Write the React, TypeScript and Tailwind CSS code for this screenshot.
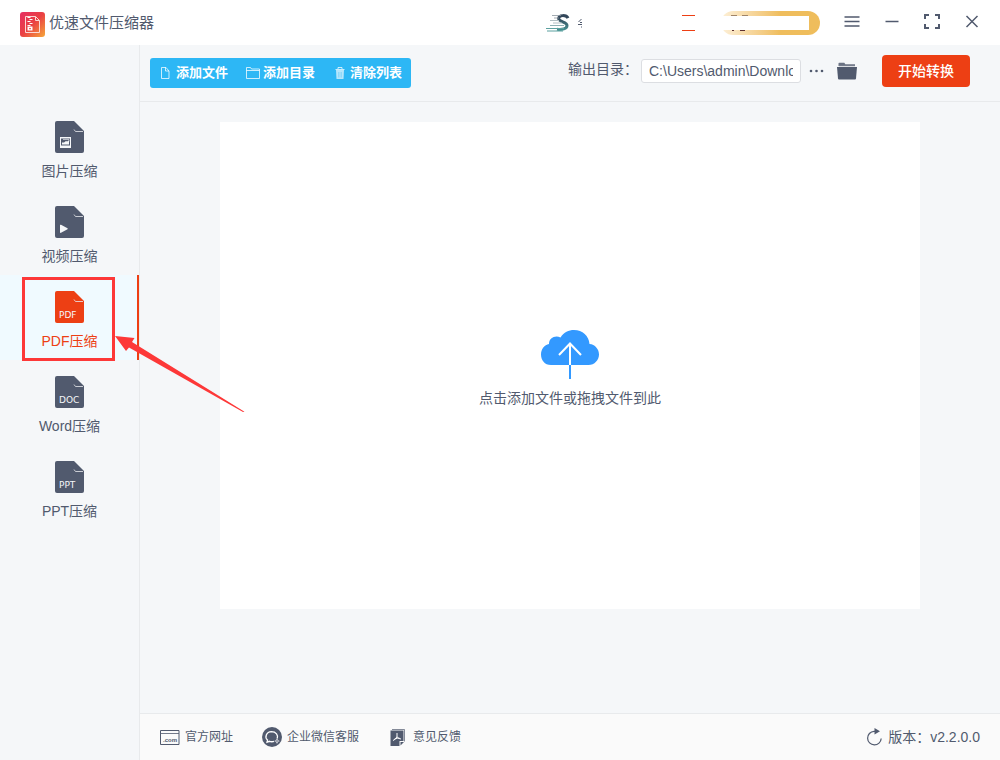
import { useState } from 'react';
import type { ReactNode } from 'react';

type TabKey = 'image' | 'video' | 'pdf' | 'word' | 'ppt';

const TABS: { key: TabKey; label: string; tag?: string }[] = [
  { key: 'image', label: '图片压缩' },
  { key: 'video', label: '视频压缩' },
  { key: 'pdf', label: 'PDF压缩', tag: 'PDF' },
  { key: 'word', label: 'Word压缩', tag: 'DOC' },
  { key: 'ppt', label: 'PPT压缩', tag: 'PPT' },
];

function AppLogo() {
  return (
    <svg width="25" height="25" viewBox="0 0 25 25" fill="none">
      <defs>
        <linearGradient id="logoFill" x1="0" y1="0" x2="25" y2="25" gradientUnits="userSpaceOnUse">
          <stop offset="0" stopColor="#e62e63" />
          <stop offset="0.5" stopColor="#ea4143" />
          <stop offset="1" stopColor="#f6a83a" />
        </linearGradient>
      </defs>
      <rect width="25" height="25" rx="3" fill="url(#logoFill)" />
      <path d="M5.5 4.500h10l4 4v12h-14z" stroke="#fbd9d6" />
      <path d="M15.500 4.500v4h4" stroke="#fbd9d6" />
      <path d="M7.500 5.500h3M9.500 7.500h3M7.500 9.500h3M9.500 11.500h3M7.500 13.500h3" stroke="#fff" strokeWidth="1.200" />
      <path d="M7.500 14.500h5V18.500h-5z" fill="#fff" />
      <path d="M9 16.700h2" stroke="#ea4143" />
    </svg>
  );
}

function UserLogo() {
  return (
    <svg width="24" height="18" viewBox="0 0 24 18" fill="none">
      <defs>
        <linearGradient id="userFill" x1="0" y1="0" x2="0" y2="18" gradientUnits="userSpaceOnUse">
          <stop offset="0.2" stopColor="#33475a" />
          <stop offset="1" stopColor="#4a9a98" />
        </linearGradient>
      </defs>
      <path d="M22 4.200C20.500.800 12.800.600 12.600 4.600c0 3.400 8.400 3.200 8.400 6.800 0 3.600-5 4.400-10 3.800" stroke="url(#userFill)" strokeWidth="3" />
      <path d="M6 1.500h9M8 4h5" stroke="#8a959e" strokeWidth="0.800" />
      <path d="M4 6.500h9M7 9h9" stroke="#b3bec3" strokeWidth="1" />
      <path d="M4 11.500h14" stroke="#8fb0b3" strokeWidth="1" />
      <path d="M0 14.500h18M1 17h16" stroke="#5ba09f" strokeWidth="1" />
    </svg>
  );
}

function DocIcon({ kind, tag }: { kind: TabKey; tag?: string }) {
  return (
    <svg width="29" height="32" viewBox="0 0 29 32" fill="none">
      <path d="M2 0h17l10 10v20a2 2 0 0 1-2 2H2a2 2 0 0 1-2-2V2a2 2 0 0 1 2-2z" fill="currentColor" />
      <path d="M19 8.500l1.500 2H28" stroke="#e8eaed" strokeOpacity="0.8" />
      {kind === 'image' && (
        <>
          <path d="M5 16h11v11H5z" fill="#f5f7f9" />
          <path d="M6 17.500h9v7H6z" fill="currentColor" />
          <path d="M7 23.500v-2h2l2-1.500 1 .500 2-1v4z" fill="#f5f7f9" />
          <path d="M8 18.500h6v2" stroke="#f5f7f9" strokeOpacity="0.6" />
        </>
      )}
      {kind === 'video' && (
        <path d="M5 19v7.500q.300.700 1 .300l6.500-3.500q.500-.500 0-1L6 18.800q-.700-.300-1 .200z" fill="#f5f7f9" />
      )}
      {tag && (
        <text x="4" y="27" fontSize="9" fontFamily="DejaVu Sans, sans-serif" fill="#f5f7f9">
          {tag}
        </text>
      )}
    </svg>
  );
}

/* Marks the tab the user is being guided to */
function Highlight() {
  return (
    <>
      <span className="pointer-events-none absolute left-[22px] top-[2px] h-[84px] w-[93px] border-3 border-[#fd3838]" />
      <svg
        className="pointer-events-none absolute left-[115px] top-[60px]"
        width="130"
        height="78"
        viewBox="0 0 130 78"
      >
        <path d="M0 1l19.500 2-2.500 4L129.500 76.700 128 77 14 12.500 11 16z" fill="#fd3838" />
      </svg>
    </>
  );
}

function FileIcon() {
  return (
    <svg width="14" height="14" viewBox="0 0 14 14" fill="none" stroke="#fff" strokeOpacity="0.75">
      <path d="M2.500 1.500h4.500l3 3.500v7.500H2.500z" />
      <path d="M6.500 1.500v3.500h3.500" />
    </svg>
  );
}

function FolderIcon() {
  return (
    <svg width="14" height="14" viewBox="0 0 14 14" fill="none" stroke="#fff" strokeOpacity="0.75">
      <path d="M.5 12.500V1.500h4l1 1.500h8v9.500z" />
      <path d="M.5 4.500h13" />
    </svg>
  );
}

function TrashIcon() {
  return (
    <svg width="14" height="14" viewBox="0 0 14 14" fill="none">
      <path d="M3 4h8l-.500 9h-7z" fill="#fff" fillOpacity="0.65" />
      <path d="M2.500 3.500h9M5 3V1.500h4V3" stroke="#fff" strokeOpacity="0.75" />
      <path d="M5.500 6v5.500M7 6v5.500M8.500 6v5.500" stroke="#2db7f5" strokeOpacity="0.5" strokeWidth="0.600" />
    </svg>
  );
}

function WindowButton({ label, children }: { label: string; children: ReactNode }) {
  return (
    <button type="button" aria-label={label} className="flex h-11 w-10 items-center justify-center pb-1">
      <svg width="18" height="18" viewBox="0 0 18 18" fill="none" stroke="#515a6e">
        {children}
      </svg>
    </button>
  );
}

function TitleBar() {
  return (
    <header className="flex h-[45px] shrink-0 items-center bg-white pl-5 pr-2">
      <div className="flex items-center gap-1 pt-1">
        <AppLogo />
        <h1 className="pb-1 text-[15px] leading-6">优速文件压缩器</h1>
      </div>
      <div className="ml-auto flex items-center">
        <UserLogo />
        <svg className="ml-2" width="4" height="12" viewBox="0 0 4 12" fill="none" stroke="#515a6e">
          <path d="M3.500 2L.5 5M2 5.500h2M0 7.500h4M3 10h1" />
        </svg>
        <span className="ml-[100px] h-4 w-[13px] border-y border-[#ed3f14]" />
        <button
          type="button"
          aria-label="会员"
          className="ml-[26px] h-6 w-[99px] rounded-full bg-linear-to-r from-[#fdf0d8] to-[#efbd5c] to-60%"
        >
          <svg width="99" height="24" viewBox="0 0 99 24" fill="none">
            <path d="M10 4.500h6M21 4.500h6" stroke="#a08468" />
            <path d="M11 19.500h2M19 19.500h5" stroke="#5e3030" />
            <path d="M0 5h88v14H0z" fill="#fff" />
          </svg>
        </button>
      </div>
      <div className="ml-3 flex">
        <WindowButton label="菜单">
          <path d="M1.500 5h15M1.500 9.500h15M1.500 14h15" strokeWidth="1.500" />
        </WindowButton>
        <WindowButton label="最小化">
          <path d="M2.500 9.500h13" strokeWidth="1.500" />
        </WindowButton>
        <WindowButton label="最大化">
          <path d="M2 7V3h4M12 3h4v4M16 12v4h-4M6 16H2v-4" strokeWidth="2" />
        </WindowButton>
        <WindowButton label="关闭">
          <path d="M3.500 4l11 11M14.500 4l-11 11" strokeWidth="1.500" />
        </WindowButton>
      </div>
    </header>
  );
}

function Toolbar() {
  const [path, setPath] = useState('C:\\Users\\admin\\Downloads');

  return (
    <div className="flex h-[57px] shrink-0 items-center border-b border-[#e8eaec] pl-[10px] pr-[30px]">
      <div className="flex h-[30px] items-center gap-[18px] rounded-[3px] bg-[#2db7f5] pl-[9px] pr-[9px] text-[13px] font-bold text-white">
        <button type="button" className="flex items-center gap-[3px]">
          <FileIcon />
          添加文件
        </button>
        <button type="button" className="flex items-center gap-[3px]">
          <FolderIcon />
          添加目录
        </button>
        <button type="button" className="flex items-center gap-[3px]">
          <TrashIcon />
          清除列表
        </button>
      </div>

      <div className="ml-auto flex items-center pb-1">
        <label htmlFor="output" className="pb-1 text-sm">
          输出目录：
        </label>
        <input
          id="output"
          type="text"
          value={path}
          onChange={(e) => setPath(e.target.value)}
          className="ml-[3px] h-6 w-40 rounded-[3px] border border-[#dcdee2] bg-white px-[7px] text-sm outline-none"
        />
        <button type="button" aria-label="选择目录" className="ml-2">
          <svg width="16" height="4" viewBox="0 0 16 4" fill="#515a6e">
            <circle cx="2" cy="2" r="1.300" />
            <circle cx="7.500" cy="2" r="1.300" />
            <circle cx="13" cy="2" r="1.300" />
          </svg>
        </button>
        <button type="button" aria-label="打开目录" className="ml-3">
          <svg width="20" height="18" viewBox="0 0 20 18" fill="#515a6e">
            <path d="M1.500 4V1.500q0-.800.800-.800h5l1 1.500H18V4z" fillOpacity="0.85" />
            <path d="M0 5h20l-1 11.500q-.100 1-1 1H2q-.900 0-1-1z" />
            <path d="M2 4.300h16" stroke="#c3c7cf" strokeWidth="0.700" />
          </svg>
        </button>
        <button
          type="button"
          className="ml-[25px] h-8 rounded bg-[#ed3f14] px-4 text-sm font-medium text-white"
        >
          开始转换
        </button>
      </div>
    </div>
  );
}

function FooterBar() {
  return (
    <footer className="flex h-[47px] shrink-0 items-center border-t border-[#e8eaec] bg-[#fafafa] px-5">
      <div className="flex items-center gap-[29px] text-xs">
        <a href="#site" className="flex items-center gap-[5px]">
          <svg width="20" height="20" viewBox="0 0 20 20" fill="none" stroke="#515a6e">
            <path d="M.5 3.500h18.500v14H.5z" />
            <path d="M1 6.500h18" strokeOpacity="0.8" />
            <text x="3" y="15" fontSize="6" fontWeight="bold" fontFamily="Liberation Sans, sans-serif" fill="#515a6e" stroke="none">
              .com
            </text>
          </svg>
          官方网址
        </a>
        <a href="#wechat" className="flex items-center gap-[5px]">
          <svg width="20" height="20" viewBox="0 0 20 20" fill="none">
            <circle cx="10" cy="10" r="10" fill="#515a6e" />
            <path d="M12 14.300c-1.500.600-3.200.500-4.500 0L5 15.200l.500-2.200C2.500 10.500 4 5 9.500 4.700c4.500 0 7 3.300 5.700 6.800" stroke="#fff" strokeWidth="1.300" />
            <path d="M15 12.200v3.600M13.200 14h3.600" stroke="#fff" strokeWidth="1.200" strokeLinecap="round" />
            <circle cx="15" cy="14" r="0.800" fill="#515a6e" />
          </svg>
          企业微信客服
        </a>
        <a href="#feedback" className="flex items-center gap-[5px]">
          <svg width="20" height="20" viewBox="0 0 20 20" fill="none">
            <path d="M4 2.500h12.500v12" stroke="#515a6e" strokeOpacity="0.7" />
            <path d="M2.500 3.500h13V14h-4v5h-9z" fill="#515a6e" />
            <path d="M12.500 18.500V15h3.500z" fill="#515a6e" />
            <path d="M9 6v3.500q-1 3-4 4M9 9.500q1 2.500 4 2.500M6.500 12q3-1.300 5-.800" stroke="#fff" />
          </svg>
          意见反馈
        </a>
      </div>
      <div className="ml-auto flex items-center gap-[5px] text-sm">
        <svg width="17" height="18" viewBox="0 0 17 18" fill="none">
          <path d="M9.500 3.300H8a6.800 6.800 0 1 0 7.200 7.200" stroke="#515a6e" strokeWidth="1.200" />
          <path d="M8.500 0l5.500 3.300-5.500 3.200z" fill="#515a6e" />
        </svg>
        版本：v2.2.0.0
      </div>
    </footer>
  );
}

export default function App() {
  const [active, setActive] = useState<TabKey>('pdf');

  return (
    <div
      lang="zh-CN"
      className="flex h-screen flex-col overflow-hidden bg-[#f5f7f9] font-['Liberation_Sans','Noto_Sans_CJK_SC',sans-serif] text-[#515a6e]"
    >
      <TitleBar />
      <div className="flex min-h-0 flex-1">
        <nav className="relative z-10 w-[140px] shrink-0 border-r border-[#e8eaec] pt-[60px]">
          {TABS.map((tab) => (
            <button
              key={tab.key}
              type="button"
              onClick={() => setActive(tab.key)}
              className={`relative flex h-[85px] w-full flex-col items-center gap-2 border-r-2 pl-[2px] pt-4 text-sm ${
                active === tab.key
                  ? 'border-[#ed3f14] bg-[#f0faff] text-[#ed3f14]'
                  : 'border-transparent'
              }`}
            >
              <DocIcon kind={tab.key} tag={tab.tag} />
              <span>{tab.label}</span>
              {tab.key === 'pdf' && <Highlight />}
            </button>
          ))}
        </nav>

        <main className="flex min-w-0 flex-1 flex-col">
          <Toolbar />
          <button
            type="button"
            className="mx-20 mb-[104px] mt-5 flex flex-1 flex-col items-center justify-center gap-2 bg-white pt-1 text-sm"
          >
            <svg width="60" height="52" viewBox="0 0 60 52" fill="none">
              <path
                d="M11 37C4.500 37 1 32 1 26.500 1 21 4.500 17 9 16 9 10 15 7 20.500 9.500 24 4 28.500 2 34 2c8.500 0 15 6 15.500 14C55 16.500 59 21 59 26.500S54.500 37 48.500 37z"
                fill="#39f"
              />
              <path d="M30 37v14" stroke="#39f" strokeWidth="2" />
              <path d="M30 37V15.500M19 27l11-11.500L41 27" stroke="#fff" strokeWidth="2" />
            </svg>
            点击添加文件或拖拽文件到此
          </button>
          <FooterBar />
        </main>
      </div>
    </div>
  );
}
